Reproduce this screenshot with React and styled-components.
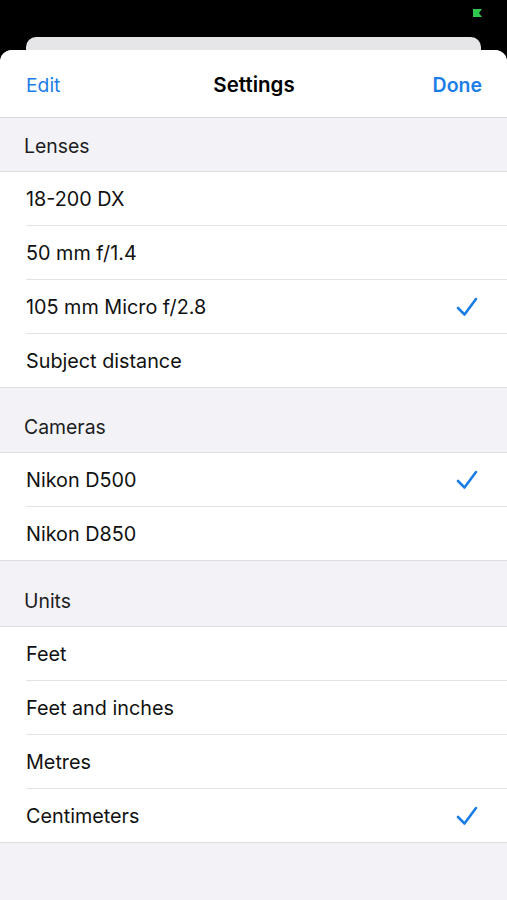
import React from "react";
import styled, { createGlobalStyle } from "styled-components";

const Global = createGlobalStyle`
  html, body { margin: 0; padding: 0; background: #000; }
  body { font-family: Inter, "Noto Sans", "Liberation Sans", sans-serif; -webkit-font-smoothing: antialiased; }
`;

const Screen = styled.div`
  width: 507px;
  height: 900px;
  background: #000;
  display: flex;
  flex-direction: column;
  overflow: hidden;
`;

const StatusBar = styled.div`
  height: 37px;
  display: flex;
  justify-content: flex-end;
  align-items: flex-start;
  padding: 9px 25px 0 0;
  box-sizing: border-box;
`;

const BackCard = styled.div`
  height: 13px;
  margin: 0 26px;
  background: #e6e6e8;
  border-radius: 10px 10px 0 0;
  flex-shrink: 0;
`;

const Sheet = styled.div`
  flex: 1;
  background: #f2f2f7;
  border-radius: 12px 12px 0 0;
  overflow: hidden;
  display: flex;
  flex-direction: column;
`;

const NavBar = styled.div`
  height: 68px;
  background: #fff;
  border-bottom: 1px solid #d9d9dc;
  box-sizing: border-box;
  display: grid;
  grid-template-columns: 1fr auto 1fr;
  align-items: center;
  padding: 2px 25px 0 26px;
`;

const NavButton = styled.span`
  color: #1b7ee6;
  font-size: ${(p) => (p.$bold ? 19.5 : 19.3)}px;
  font-weight: ${(p) => (p.$bold ? 600 : 400)};
  justify-self: ${(p) => p.$align};
`;

const Title = styled.span`
  font-size: 20.5px;
  font-weight: 600;
  color: #000;
`;

const SectionHeader = styled.div`
  height: ${(p) => p.$h}px;
  box-sizing: border-box;
  display: flex;
  align-items: flex-end;
  padding: 0 0 13px 24px;
  font-size: 19.4px;
  color: #1c1c1e;
  border-bottom: 1px solid #dedee1;
`;

const Group = styled.div`
  background: #fff;
  border-bottom: 1px solid #dedee1;
`;

const Row = styled.div`
  height: ${(p) => (p.$last ? 53 : 54)}px;
  box-sizing: border-box;
  margin-left: 26px;
  padding: 1px 29px 0 0;
  display: flex;
  align-items: center;
  justify-content: space-between;
  font-size: 19.8px;
  color: #111;
  border-bottom: ${(p) => (p.$last ? "none" : "1px solid #e3e3e6")};
`;

const Check = () => (
  <svg width="22" height="20" viewBox="0 0 22 20">
    <path d="M2 11 L8.5 17.5 L20 2" fill="none" stroke="#1b7ee6" strokeWidth="2.6" strokeLinecap="round" strokeLinejoin="round" />
  </svg>
);

const Battery = () => (
  <svg width="9" height="8" viewBox="0 0 9 8">
    <path d="M0 0 H9 L6 4 L9 8 H0 Z" fill="#2ec84f" />
  </svg>
);

const sections = [
  { title: "Lenses", h: 54, rows: [["18-200 DX"], ["50 mm f/1.4"], ["105 mm Micro f/2.8", true], ["Subject distance"]] },
  { title: "Cameras", h: 65, rows: [["Nikon D500", true], ["Nikon D850"]] },
  { title: "Units", h: 66, rows: [["Feet"], ["Feet and inches"], ["Metres"], ["Centimeters", true]] },
];

export default function App() {
  return (
    <>
      <Global />
      <Screen>
        <StatusBar>
          <Battery />
        </StatusBar>
        <BackCard />
        <Sheet>
          <NavBar>
            <NavButton $align="start">Edit</NavButton>
            <Title>Settings</Title>
            <NavButton $align="end" $bold>Done</NavButton>
          </NavBar>
          {sections.map((s) => (
            <React.Fragment key={s.title}>
              <SectionHeader $h={s.h}>{s.title}</SectionHeader>
              <Group>
                {s.rows.map(([label, checked], i) => (
                  <Row key={label} $last={i === s.rows.length - 1}>
                    <span>{label}</span>
                    {checked && <Check />}
                  </Row>
                ))}
              </Group>
            </React.Fragment>
          ))}
        </Sheet>
      </Screen>
    </>
  );
}
